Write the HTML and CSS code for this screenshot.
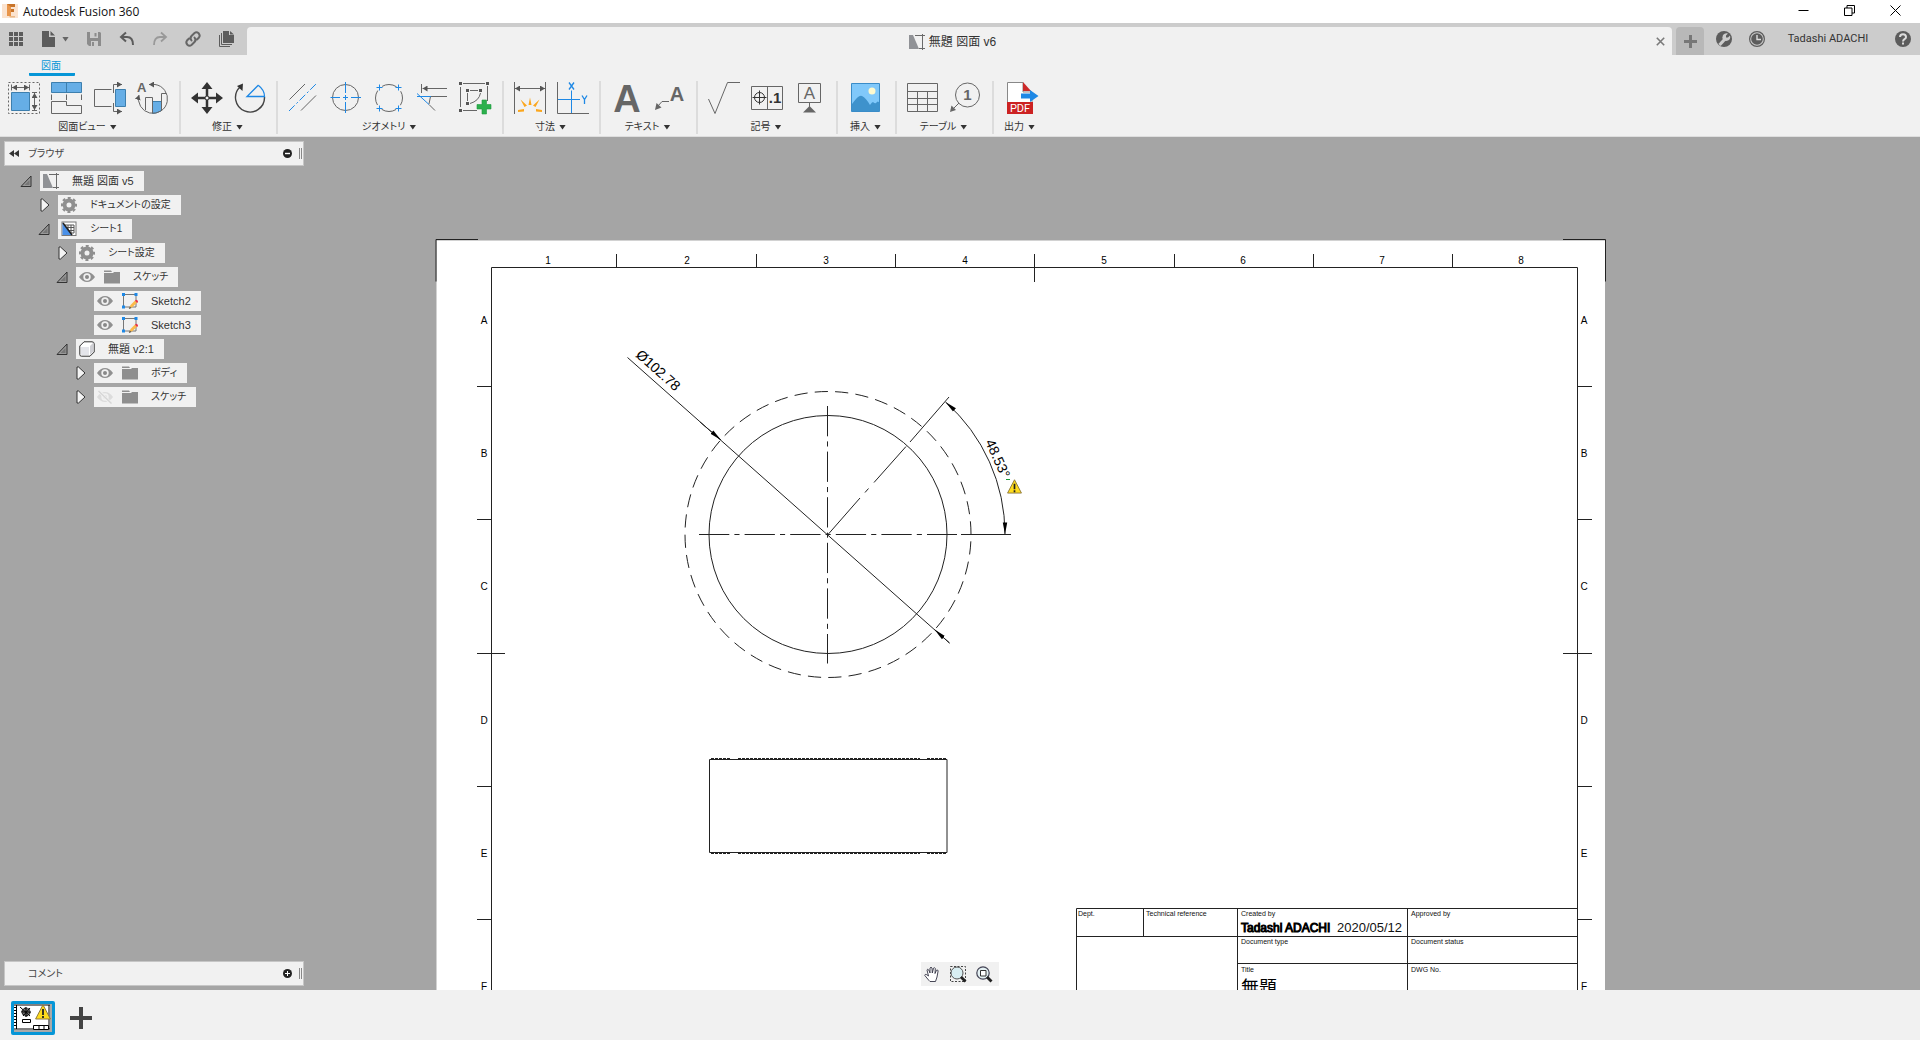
FILE: index.html
```html
<!DOCTYPE html>
<html lang="ja">
<head>
<meta charset="utf-8">
<title>Autodesk Fusion 360</title>
<meta name="viewport" content="width=device-width, initial-scale=1">
<link rel="stylesheet" href="styles.css">
</head>
<body>
<svg class="defs" aria-hidden="true">
  <defs>
    <symbol id="i-drawing" viewBox="0 0 16 16">
      <path d="M0 1h4l6 14H0z" fill="#909296"/>
      <path d="M6 1.500h10M13.500 0v16M10 14.500h6" fill="none" stroke="#6a6a6a"/>
    </symbol>
    <symbol id="i-gear" viewBox="0 0 16 16">
      <circle cx="8" cy="8" r="4.500" fill="none" stroke="#8f8f8f" stroke-width="4"/>
      <circle cx="8" cy="8" r="7" fill="none" stroke="#8f8f8f" stroke-width="2.400" stroke-dasharray="2.900 2.598" stroke-dashoffset="1.450"/>
    </symbol>
    <symbol id="i-sheet" viewBox="0 0 16 16">
      <rect x="1" y="1" width="14" height="13.500" fill="#fff" stroke="#777"/>
      <path d="M4 4h9v8H4zM7 4v8M10 4v8M4 6.500h9M4 9.500h9" fill="none" stroke="#555"/>
      <path d="M1.500 2L11 14H1.500z" fill="#4a90e8"/>
      <path d="M2 2l9 12" stroke="#222" stroke-width="1.500"/>
    </symbol>
    <symbol id="i-eye" viewBox="0 0 16 16">
      <path d="M0 8Q3.500 3 8 3t8 5q-3.500 5-8 5T0 8z" fill="#909090"/>
      <circle cx="8" cy="8" r="3.700" fill="#f1f1f1"/>
      <circle cx="8" cy="8" r="2" fill="#888"/>
    </symbol>
    <symbol id="i-eye-off" viewBox="0 0 16 16">
      <path d="M0 8Q3.500 3 8 3t8 5q-3.500 5-8 5T0 8z" fill="#dcdcdc"/>
      <circle cx="8" cy="8" r="3.700" fill="#f1f1f1"/>
      <circle cx="8" cy="8" r="2" fill="#dcdcdc"/>
      <path d="M2 2l12 12.500" stroke="#f1f1f1" stroke-width="3"/>
      <path d="M1.500 2l13 12.500" stroke="#d6d6d6" stroke-width="1.400"/>
    </symbol>
    <symbol id="i-folder" viewBox="0 0 16 16">
      <path d="M0 1.500h7l1 1.500H0zM0 4h9l1-1h6v11.500H0z" fill="#8f8f8f"/>
    </symbol>
    <symbol id="i-sketch" viewBox="0 0 16 16">
      <path d="M1.500 1.500h12.500v12.500h-12.500z" fill="none" stroke="#777"/>
      <path d="M0 0h3v3H0zM12.500 0h3v3h-3zM0 12.500h3v3H0z" fill="#1e88e5"/>
      <path d="M7 16l1.500-4 4.500-4.500 2.200 2-4.700 4.500z" fill="#fbb94a"/>
      <path d="M13 7.800l1-1q2.200.2 2 2.200l-.9.900z" fill="#e8304a"/>
      <path d="M6.800 16l1-2.500 1.700 1.500z" fill="#555"/>
    </symbol>
    <symbol id="i-cube" viewBox="0 0 16 16">
      <path d="M.8 5L5 .8h8Q15.200.8 15.200 3v8L11 15.200H2.500Q.8 15.200.8 13.500z" fill="#fff" stroke="#333"/>
      <path d="M2 6h8v8H3Q2 14 2 13z" fill="#e4e5ea"/>
      <path d="M11 5l3.500-3.500v9L11 14z" fill="#cfcfd4"/>
    </symbol>
    <symbol id="i-open" viewBox="0 0 12 12">
      <path d="M11 1v10.500H1z" fill="#999" stroke="#333"/>
      <path d="M9.500 5v5h-5z" fill="#777"/>
    </symbol>
    <symbol id="i-closed" viewBox="0 0 12 14">
      <path d="M2 1h1.500l6.500 6-6.500 6H2z" fill="#f4f4f4" stroke="#333"/>
    </symbol>
    <symbol id="i-warning" viewBox="0 0 16 16">
      <path d="M8 .8L15.400 15H.6z" fill="#ffdc1c" stroke="#8f7a3c" stroke-linejoin="round"/>
      <path d="M8 5v6M8 12v2" stroke="#222" stroke-width="1.800"/>
    </symbol>
    <marker id="tip" viewBox="0 0 12 6" refX="12" refY="3" markerWidth="12" markerHeight="6" markerUnits="userSpaceOnUse" orient="auto-start-reverse">
      <path d="M0 .8L12 3 0 5.200z"/>
    </marker>
    <marker id="tip-s" viewBox="0 0 5 6" refX="5" refY="3" markerWidth="5" markerHeight="6" markerUnits="userSpaceOnUse" orient="auto-start-reverse">
      <path d="M0 0L5 3 0 6z" fill="#555"/>
    </marker>
  </defs>
</svg>

<header class="titlebar">
  <svg class="logo" viewBox="0 0 16 16" aria-hidden="true">
    <path d="M0 1h16v14H0z" fill="#fbe3cf"/>
    <path d="M5 1h8v3H9v2h3v3H9v4H5z" fill="#c8742a"/>
    <path d="M5 1l4 3v9H5z" fill="#e8954a"/>
    <path d="M7 13h6v1.500H8z" fill="#e9b98a"/>
  </svg>
  <h1 class="app-name">Autodesk Fusion 360</h1>
  <div class="window-buttons">
    <button type="button" aria-label="最小化"><svg viewBox="0 0 11 11"><path d="M.5 5.500h10"/></svg></button>
    <button type="button" aria-label="元に戻す"><svg viewBox="0 0 11 11"><path d="M.5 3h7.500v7.500H.5zM3 3V.5h7.500V8H8"/></svg></button>
    <button type="button" aria-label="閉じる"><svg viewBox="0 0 11 11"><path d="M.5.5l10 10M10.500.5l-10 10"/></svg></button>
  </div>
</header>

<div class="appbar">
  <div class="quick">
    <button type="button" aria-label="データパネル"><svg class="i16" viewBox="0 0 16 16"><path fill="#5c5c5c" d="M1 1h4v4H1zM6 1h4v4H6zM11 1h4v4h-4zM1 6h4v4H1zM6 6h4v4H6zM11 6h4v4h-4zM1 11h4v4H1zM6 11h4v4H6zM11 11h4v4h-4z"/></svg></button>
    <button type="button" class="with-caret" aria-label="ファイル"><svg class="i16" viewBox="0 0 16 16"><path fill="#5c5c5c" d="M1 0h7v6h6v10H1zM9.500 0L14 4.500H9.500z"/></svg><span class="caret caret-soft"></span></button>
    <button type="button" aria-label="保存"><svg class="i16" viewBox="0 0 16 16"><path fill="#8c8c8c" fill-rule="evenodd" d="M1 1h13l1 1v13H3l-2-2zM4 1v6h8V1zM8.500 2h2v3.500h-2zM5 10v5h7v-5zM6 11h2v4H6z"/></svg></button>
    <button type="button" aria-label="元に戻す"><svg class="i16" viewBox="0 0 16 16"><path fill="none" stroke="#5c5c5c" stroke-width="2" d="M7 1.500L2 6l5 4.500M2 6h6q6 0 6 8"/></svg></button>
    <button type="button" aria-label="やり直し"><svg class="i16" viewBox="0 0 16 16"><path fill="none" stroke="#999" stroke-width="1.800" d="M9 1.500L14 6l-5 4.500M14 6H8Q2 6 2 14"/></svg></button>
    <button type="button" aria-label="リンク"><svg class="i16" viewBox="0 0 16 16"><path fill="none" stroke="#666" stroke-width="2" stroke-linecap="round" d="M6.500 9.500Q4.500 7 6.500 5L9.500 2Q11.500.5 13.700 2.300 15.500 4.500 14 6.500l-2 2M9.500 6.500q2 2.500 0 4.500l-3 3Q4.500 15.500 2.300 13.700.5 11.500 2 9.500l2-2"/></svg></button>
    <button type="button" aria-label="コピー"><svg class="i16" viewBox="0 0 16 16"><path fill="#5c5c5c" d="M5 0h6v4h5v8H5zM12 0l4 3.500h-4z"/><path fill="none" stroke="#5c5c5c" d="M3.500 2v11.500H14M1.500 4v11.500H12"/></svg></button>
  </div>
  <div class="doc-tab">
    <div class="doc-title"><svg class="i16"><use href="#i-drawing"/></svg><span>無題 図面 v6</span></div>
    <button type="button" aria-label="タブを閉じる"><svg class="i-close" viewBox="0 0 9 9"><path d="M.8.8l7.400 7.400M8.200.8L.8 8.200" fill="none" stroke="#7a7a7a" stroke-width="1.600"/></svg></button>
  </div>
  <button type="button" class="new-tab" aria-label="新しいタブ"><svg class="i-plus" viewBox="0 0 13 13"><path d="M6.500 0v13M0 6.500h13" stroke="#777" stroke-width="3"/></svg></button>
  <div class="account">
    <button type="button" aria-label="ジョブの状態"><svg class="i16" viewBox="0 0 16 16"><circle cx="8" cy="8" r="8" fill="#5c5c5c"/><path d="M3.500 14L9 8" stroke="#ccc" stroke-width="3.200"/><path d="M12 2.500L10 4.500v2h2l2-2q1 3.500-2 5-2.500 1-4.500-.5Q5.500 6.500 7 4q2-2.500 5-1.500z" fill="#ccc"/></svg></button>
    <button type="button" aria-label="履歴"><svg class="i16" viewBox="0 0 16 16"><circle cx="8" cy="8" r="7.400" fill="none" stroke="#5c5c5c" stroke-width="1.200"/><circle cx="8" cy="8" r="5.800" fill="#5c5c5c"/><path d="M8 4v4.500h4" fill="none" stroke="#ddd" stroke-width="1.400"/></svg></button>
    <button type="button" class="user">Tadashi ADACHI</button>
    <button type="button" aria-label="ヘルプ"><svg class="i16" viewBox="0 0 16 16"><circle cx="8" cy="8" r="8" fill="#5c5c5c"/><path d="M5 6Q5 3.200 8 3.200T11 6q0 1.300-1.500 2.200T8 10.500" fill="none" stroke="#ddd" stroke-width="2"/><path d="M7 11.500h2v2H7z" fill="#ddd"/></svg></button>
  </div>
</div>

<nav class="ribbon" aria-label="ツールバー">
  <div class="ribbon-tabs"><button type="button" class="ribbon-tab">図面</button></div>
  <div class="groups">
    <section class="group">
      <div class="tools">
        <button type="button" aria-label="ベースビュー"><svg class="i32" viewBox="0 0 32 32"><path class="ln" stroke-dasharray="2 2" d="M.5.500h31v31H.5z"/><path class="bl" d="M3.500 10.500h18v18h-18z"/><path class="ln" d="M3.500 2.500v6M21.500 2.500v6M24 10.500h5M24 28.500h5"/><path class="ln" marker-start="url(#tip-s)" marker-end="url(#tip-s)" d="M4 5.500h17"/><path class="ln" marker-start="url(#tip-s)" marker-end="url(#tip-s)" d="M26.500 11v17"/></svg></button>
        <button type="button" aria-label="投影ビュー"><svg class="i32" viewBox="0 0 32 32"><path class="bl" d="M.5.500h30v10H.5zM15.500.500v10"/><path class="ln" d="M.5 12.500v5.500M15.500 12.500v5.500M30.500 12.500v5.500M.5 19.500h15v4h15v8H.5z"/></svg></button>
        <button type="button" aria-label="断面図"><svg class="i32" viewBox="0 0 32 32"><path class="bl" d="M21.500 7.500h10v17h-10z"/><path class="ln" d="M17.500 7.500H.5v17h17"/><path class="ln" marker-end="url(#tip-s)" d="M19.500 11V2.500H28"/><path class="ln" marker-end="url(#tip-s)" d="M19.500 21v8.500H28"/></svg></button>
        <button type="button" aria-label="詳細図"><svg class="i32" viewBox="0 0 32 32"><text x="0" y="10" class="glyph g13">A</text><path class="bl" d="M15.500 19.500h9v9l-4 2-5 1z"/><path class="ln" d="M8.500 28V15.500h7V31M24.500 28V11.500h5"/><path class="ln" marker-start="url(#tip-s)" marker-end="url(#tip-s)" d="M12 2.500h6A14.500 14.500 0 1 1 2 13"/></svg></button>
      </div>
      <button type="button" class="group-label">図面ビュー<span class="caret"></span></button>
    </section>
    <section class="group">
      <div class="tools">
        <button type="button" aria-label="移動"><svg class="i32" viewBox="0 0 32 32"><path d="M16 4v24M4 16h24" stroke="#333" stroke-width="2.500"/><path d="M16 0l5.500 7h-11zM16 32l-5.500-7h11zM0 16l7-5.500v11zM32 16l-7 5.500v-11z" fill="#333"/><circle cx="16" cy="16" r="2" fill="#f1f1f1" stroke="#333"/></svg></button>
        <button type="button" aria-label="回転"><svg class="i32" viewBox="0 0 32 32"><path d="M6 5A14.500 14.500 0 1 0 30.500 15" fill="none" stroke="#444" stroke-width="1.400"/><path d="M9 1.500L3 4l5.500 5z" fill="#333"/><path d="M24.500 3.500Q30.500 8 30.500 14.500H13L24.500 3" fill="none" stroke="#1e88e5" stroke-width="1.300"/></svg></button>
      </div>
      <button type="button" class="group-label">修正<span class="caret"></span></button>
    </section>
    <section class="group">
      <div class="tools">
        <button type="button" aria-label="中心線"><svg class="i32" viewBox="0 0 32 32"><path class="ln" d="M1.500 17.500L17 2M13 28.500l15-15"/><path class="lb" stroke-dasharray="8 2.500 2 2.500" d="M1 29L28 2"/></svg></button>
        <button type="button" aria-label="中心マーク"><svg class="i32" viewBox="0 0 32 32"><circle class="ln" cx="14.500" cy="15.500" r="13"/><path class="lb" d="M14.500 0v11M14.500 20v11M-.5 15.500H9M20 15.500h10M12 15.500h5M14.500 13v5"/></svg></button>
        <button type="button" aria-label="中心マークパターン"><svg class="i32" viewBox="0 0 32 32"><circle class="ln" cx="15" cy="16" r="13.500" stroke-dasharray="15.200 6" stroke-dashoffset="7.600"/><path class="lb" d="M2.500 5.500h6M5.500 2.500v6M21.500 5.500h6M24.500 2.500v6M2.500 26.500h6M5.500 23.500v6M21.500 26.500h6M24.500 23.500v6"/></svg></button>
        <button type="button" aria-label="エッジ延長"><svg class="i32" viewBox="0 0 32 32"><path class="ln" d="M4.500 2v9M14 14.500h16M12 22.500l6 6M13.500 14.500L12 22"/><path class="ln" marker-start="url(#tip-s)" d="M5.500 6.500H30"/><path class="lb" d="M0 14.500h14M0 11.500l12 11"/></svg></button>
        <button type="button" aria-label="スケッチを作成"><svg class="i32" viewBox="0 0 32 32"><path class="ln" d="M.5 5v20M3 1.500h22M27.500 4v15M3 28.500h14M7.500 11v8M10 8.500h8M20.500 11Q19 19 10 21.500"/><path d="M-1 0h3v3h-3zM26 0h3v3h-3zM-1 27h3v3h-3zM6 7h3v3H6zM19 7h3v3h-3zM6 20h3v3H6z" fill="#555"/><path d="M22 18h4.500v4.500H31V27h-4.500v5H22v-5h-5v-4.500h5z" fill="#2bb04c" stroke="#1d9a3e" stroke-width=".6"/></svg></button>
      </div>
      <button type="button" class="group-label">ジオメトリ<span class="caret"></span></button>
    </section>
    <section class="group">
      <div class="tools">
        <button type="button" aria-label="寸法"><svg class="i32" viewBox="0 0 32 32"><path class="ln" d="M.5 0v32M31.500 0v32"/><path class="ln" marker-start="url(#tip-s)" marker-end="url(#tip-s)" d="M1 6.500h30"/><path fill="#fba61c" d="M14.500 23L16 15.500 17.500 23zM19 23.500l6.500-6-4 7.500zM13 23.500l-6.500-6 4 7.500zM22 27l6 1v2l-6-.5zM10 27l-6 1v2l6-.5z"/></svg></button>
        <button type="button" aria-label="座標寸法"><svg class="i32" viewBox="0 0 32 32"><path class="ln" d="M.5 0v31.500H32"/><path class="lb" d="M14.500 8.500v22.500M1 17.500h22"/><path class="lb axis" d="M12 .500l5 7M17 .500l-5 7M25 13.500l2.500 4 2.500-4M27.500 17.500V22"/></svg></button>
      </div>
      <button type="button" class="group-label">寸法<span class="caret"></span></button>
    </section>
    <section class="group">
      <div class="tools">
        <button type="button" aria-label="テキスト"><svg class="i32" viewBox="0 0 32 32"><text x="16" y="30" text-anchor="middle" class="glyph g38">A</text></svg></button>
        <button type="button" aria-label="引出線"><svg class="i32" viewBox="0 0 32 32"><text x="23" y="19" text-anchor="middle" class="glyph g20">A</text><path class="ln" d="M4 24l4-4.500h7"/><path d="M1 28l1.500-7 5 4.500z" fill="#666"/></svg></button>
      </div>
      <button type="button" class="group-label">テキスト<span class="caret"></span></button>
    </section>
    <section class="group">
      <div class="tools">
        <button type="button" aria-label="表面性状"><svg class="i32" viewBox="0 0 32 32"><path class="ln" d="M.5 17L7 31.500 19.500.500H32"/></svg></button>
        <button type="button" aria-label="幾何公差"><svg class="i32" viewBox="0 0 32 32"><path class="ln" d="M.5 4.500h31v23H.5zM16.500 4.500v23"/><path d="M8.500 8.500v14M1.500 15.500h14" stroke="#333"/><circle cx="8.500" cy="15.500" r="5" fill="none" stroke="#333"/><text x="24" y="21" text-anchor="middle" class="glyph dark g15">.1</text></svg></button>
        <button type="button" aria-label="データム"><svg class="i32" viewBox="0 0 32 32"><path class="ln" d="M4.500 1.500h22v19h-22zM15.500 20.500V26"/><text x="15.500" y="17" text-anchor="middle" class="glyph thin g17">A</text><path d="M15.500 24l6.500 6.500H9z" fill="#666"/></svg></button>
      </div>
      <button type="button" class="group-label">記号<span class="caret"></span></button>
    </section>
    <section class="group">
      <div class="tools">
        <button type="button" aria-label="イメージを挿入"><svg class="i32" viewBox="0 0 32 32"><path fill="#80c8fa" stroke="#3a8cc8" d="M.5 1.500h28v28H.5z"/><circle cx="21" cy="9" r="3.500" fill="#fdf9cf"/><path d="M1 22q7-10 10-8 4 2 8 9 2-3 3-3 2 2 3 1 2-3 3.500 0v8H1z" fill="#3e92cc"/></svg></button>
      </div>
      <button type="button" class="group-label">挿入<span class="caret"></span></button>
    </section>
    <section class="group">
      <div class="tools">
        <button type="button" aria-label="テーブル"><svg class="i32" viewBox="0 0 32 32"><path class="ln" d="M.5 1.500h30v28H.5zM.5 9.500h30M.5 16.500h30M.5 22.500h30M10.500 9.500v20M20.500 9.500v20"/></svg></button>
        <button type="button" aria-label="バルーン"><svg class="i32" viewBox="0 0 32 32"><circle class="ln" cx="17.500" cy="13" r="12"/><text x="17.500" y="18" text-anchor="middle" class="glyph g15">1</text><path class="ln" d="M4 26l5-5"/><path d="M0 30l1.500-6.500L6 28z" fill="#666"/></svg></button>
      </div>
      <button type="button" class="group-label">テーブル<span class="caret"></span></button>
    </section>
    <section class="group">
      <div class="tools">
        <button type="button" aria-label="PDF を書き出し"><svg class="i32" viewBox="0 0 32 32"><path d="M2.500 20V.500H18V10h9v10" fill="#fff" stroke="#888"/><path d="M18 0l8 9h-8z" fill="#cc2a2a"/><path d="M2 20h26v12H2z" fill="#cc2222"/><text x="15" y="30" text-anchor="middle" class="pdf">PDF</text><path d="M16 11.500h9V8l8.500 6-8.500 6v-3.500h-9z" fill="#1e88e5"/></svg></button>
      </div>
      <button type="button" class="group-label">出力<span class="caret"></span></button>
    </section>
  </div>
</nav>

<main class="workspace">
  <svg class="canvas" viewBox="0 137 1920 853" preserveAspectRatio="xMidYMin slice" role="img" aria-label="図面シート">
    <path d="M436.500 240.500h1168.500v761H436.500z" fill="#fff"/>
    <g class="frame">
      <path d="M478 239.500h-42v42M1563 239.500h42.500v42"/>
      <path d="M491.500 1000V267.500h1086V1000"/>
      <path d="M616.500 254v13M756.500 254v13M895.500 254v13M1034.500 254v28M1174.500 254v13M1313.500 254v13M1452.500 254v13"/>
      <path d="M477 386.500h14M477 519.500h14M477 653.500h28M477 786.500h14M477 919.500h14M1578 386.500h14M1578 519.500h14M1563 653.500h29M1578 786.500h14M1578 919.500h14"/>
    </g>
    <g class="zone">
      <text x="548" y="264">1</text><text x="687" y="264">2</text><text x="826" y="264">3</text><text x="965" y="264">4</text>
      <text x="1104" y="264">5</text><text x="1243" y="264">6</text><text x="1382" y="264">7</text><text x="1521" y="264">8</text>
      <text x="484" y="324">A</text><text x="484" y="457">B</text><text x="484" y="590">C</text><text x="484" y="724">D</text><text x="484" y="857">E</text><text x="484" y="990">F</text>
      <text x="1584" y="324">A</text><text x="1584" y="457">B</text><text x="1584" y="590">C</text><text x="1584" y="724">D</text><text x="1584" y="857">E</text><text x="1584" y="990">F</text>
    </g>
    <g class="geometry">
      <circle cx="828" cy="534.500" r="119"/>
      <path d="M971 534.500A143 143 0 0 0 685 534.500A143 143 0 0 0 971 534.500" stroke-dasharray="13.200 7.220"/>
      <path d="M827.500 406v257.500" stroke-dasharray="30.300 5.100 5.100 5.100"/>
      <path d="M699 534.500h258" stroke-dasharray="30.300 5.100 5.100 5.100"/>
      <path d="M961 534.500h50"/>
      <path d="M828 534.500L860 498M865 492.500l3.500-4M874 482.500L906 446.500M910 442L949 397"/>
      <path d="M627.500 357.500L949.500 643"/>
      <path marker-end="url(#tip)" d="M700 422L721 440"/>
      <path marker-end="url(#tip)" d="M949.500 643L934.500 629.500"/>
      <path marker-start="url(#tip)" marker-end="url(#tip)" d="M945.500 402A177 177 0 0 1 1005 534.500"/>
    </g>
    <g class="frame">
      <path d="M709.500 759.500h237.500v93h-237.500z"/>
      <path d="M711 758.500h20M738 758.500h182M927 758.500h20M711 853.500h20M738 853.500h182M927 853.500h20" stroke-dasharray="3 1"/>
    </g>
    <g class="dimension">
      <text transform="translate(635 356) rotate(41.600)">Ø102.78</text>
      <text transform="translate(985 442) rotate(65.700)">48.53°</text>
    </g>
    <path d="M1006 479.500h4" stroke="#1a9a3a"/>
    <use href="#i-warning" x="1007" y="479" width="15" height="15"/>
    <g class="frame">
      <path d="M1577 908.500h-500.500V1000M1076 936.500h501M1238 963.500h339M1143.500 908v28M1237.500 908v92M1407.500 908v92"/>
    </g>
    <g class="caption">
      <text x="1078" y="916">Dept.</text><text x="1146" y="916">Technical reference</text><text x="1241" y="916">Created by</text><text x="1411" y="916">Approved by</text>
      <text x="1241" y="944">Document type</text><text x="1411" y="944">Document status</text>
      <text x="1241" y="972">Title</text><text x="1411" y="972">DWG No.</text>
    </g>
    <text class="author" x="1241" y="932">Tadashi ADACHI</text>
    <text class="date" x="1337" y="932">2020/05/12</text>
    <text class="sheet-title" x="1241" y="994">無題</text>
  </svg>

  <aside class="side">
    <div>
      <div class="panel-head">
        <button type="button" aria-label="折りたたむ" class="collapse"><svg class="i-back" viewBox="0 0 10 7"><path d="M5 0v7L0 3.500zM10 0v7L5 3.500z" fill="#333"/></svg></button>
        <h2>ブラウザ</h2>
        <button type="button" aria-label="最小化"><svg class="i-dot" viewBox="0 0 9 9"><circle cx="4.500" cy="4.500" r="4.500" fill="#222"/><path d="M2 4.500h5" stroke="#fff" stroke-width="1.400"/></svg></button>
        <span class="grip"></span>
      </div>
      <ul class="tree">
        <li><div class="row"><button type="button" class="toggle" aria-label="閉じる"><svg class="i12"><use href="#i-open"/></svg></button><span class="chip"><svg class="i16"><use href="#i-drawing"/></svg><span class="name">無題 図面 v5</span></span></div>
          <ul>
            <li><div class="row"><button type="button" class="toggle shut" aria-label="開く"><svg class="i14"><use href="#i-closed"/></svg></button><span class="chip"><svg class="i16"><use href="#i-gear"/></svg><span class="name kana">ドキュメントの設定</span></span></div></li>
            <li><div class="row"><button type="button" class="toggle" aria-label="閉じる"><svg class="i12"><use href="#i-open"/></svg></button><span class="chip"><svg class="i16"><use href="#i-sheet"/></svg><span class="name kana">シート1</span></span></div>
              <ul>
                <li><div class="row"><button type="button" class="toggle shut" aria-label="開く"><svg class="i14"><use href="#i-closed"/></svg></button><span class="chip"><svg class="i16"><use href="#i-gear"/></svg><span class="name kana">シート設定</span></span></div></li>
                <li><div class="row"><button type="button" class="toggle" aria-label="閉じる"><svg class="i12"><use href="#i-open"/></svg></button><span class="chip"><svg class="i16 eye"><use href="#i-eye"/></svg><svg class="i16"><use href="#i-folder"/></svg><span class="name kana">スケッチ</span></span></div>
                  <ul>
                    <li><div class="row leaf"><span class="chip"><svg class="i16 eye"><use href="#i-eye"/></svg><svg class="i16"><use href="#i-sketch"/></svg><span class="name">Sketch2</span></span></div></li>
                    <li><div class="row leaf"><span class="chip"><svg class="i16 eye"><use href="#i-eye"/></svg><svg class="i16"><use href="#i-sketch"/></svg><span class="name">Sketch3</span></span></div></li>
                  </ul>
                </li>
                <li><div class="row"><button type="button" class="toggle" aria-label="閉じる"><svg class="i12"><use href="#i-open"/></svg></button><span class="chip"><svg class="i16"><use href="#i-cube"/></svg><span class="name">無題 v2:1</span></span></div>
                  <ul>
                    <li><div class="row"><button type="button" class="toggle shut" aria-label="開く"><svg class="i14"><use href="#i-closed"/></svg></button><span class="chip"><svg class="i16 eye"><use href="#i-eye"/></svg><svg class="i16"><use href="#i-folder"/></svg><span class="name kana">ボディ</span></span></div></li>
                    <li><div class="row"><button type="button" class="toggle shut" aria-label="開く"><svg class="i14"><use href="#i-closed"/></svg></button><span class="chip"><svg class="i16 eye"><use href="#i-eye-off"/></svg><svg class="i16"><use href="#i-folder"/></svg><span class="name kana">スケッチ</span></span></div></li>
                  </ul>
                </li>
              </ul>
            </li>
          </ul>
        </li>
      </ul>
    </div>
    <div class="panel-head">
      <span class="collapse"></span>
      <h2>コメント</h2>
      <button type="button" aria-label="展開"><svg class="i-dot" viewBox="0 0 9 9"><circle cx="4.500" cy="4.500" r="4.500" fill="#222"/><path d="M2 4.500h5M4.500 2v5" stroke="#fff"/></svg></button>
      <span class="grip"></span>
    </div>
  </aside>

  <div class="navbar">
    <button type="button" aria-label="画面移動"><svg class="i16" viewBox="0 0 16 16"><path d="M5 14.500L.8 9.500q0-1.800 2-.8L4.500 10 3 4q.5-1.600 1.800 0L6 7V2q1-1.600 2 0l.3 5L9.500 2.200q1.200-1.200 1.800.3L11 7.500l1.500-3.300q1.500-.8 1.600.8L13 11l-1.500 4.500H6z" fill="#fff" stroke="#334" stroke-width=".9"/></svg></button>
    <button type="button" aria-label="窓ズーム"><svg class="i16" viewBox="0 0 16 16"><path d="M.5.500h15v15H.5z" fill="none" stroke="#444" stroke-dasharray="2 1.500"/><circle cx="7" cy="7" r="6" fill="#d8eef2" stroke="#555"/><path d="M11 11l4.500 4.500" stroke="#222" stroke-width="2.800"/></svg></button>
    <button type="button" aria-label="フィット"><svg class="i16" viewBox="0 0 16 16"><circle cx="7" cy="7" r="6.200" fill="#e4f0f3" stroke="#445" stroke-width="1.200"/><path d="M4.500 4.500h5.500V10H4.500z" fill="#fff" stroke="#333"/><path d="M11 11l4.500 4.500" stroke="#222" stroke-width="2.800"/></svg></button>
  </div>
</main>

<footer class="sheets">
  <button type="button" class="thumb" aria-label="シート1">
    <svg viewBox="0 0 38 28">
      <path d="M0 0h38v28H0z" fill="#fff"/>
      <path d="M36 0h2v28h-2zM0 26h38v2H0z" fill="#aaa"/>
      <path d="M0 1h36M0 25h36M2.500 1v24M35 1v24" stroke="#000" fill="none"/>
      <path d="M1 3v21" stroke="#000" stroke-width="2" stroke-dasharray="1 2"/>
      <circle cx="12" cy="8" r="4" fill="#777" stroke="#000" stroke-dasharray="3 1"/>
      <path d="M6 3l10 9M12 3v10M7 8h10M16 4l-7 8" stroke="#000"/>
      <path d="M8.500 15.500h8v3h-8zM19.500 21.500h15v4h-15zM25 21v4M30 21v4" fill="#fff" stroke="#000"/>
      <use href="#i-warning" x="21" y="0" width="16" height="16"/>
    </svg>
  </button>
  <button type="button" class="add-sheet" aria-label="シートを追加"><svg viewBox="0 0 22 22"><path d="M11 0v22M0 11h22" stroke="#444" stroke-width="4"/></svg></button>
</footer>
</body>
</html>
```
FILE: styles.css
```css
* { box-sizing: border-box; }

body {
  margin: 0;
  min-height: 100vh;
  display: flex;
  flex-direction: column;
  overflow: hidden;
  background: #f1f1f1;
  color: #333;
  font-family: "Liberation Sans", "Noto Sans CJK JP", sans-serif;
  font-size: 11px;
  line-height: 16px;
  font-feature-settings: "palt";
}

button {
  display: flex;
  align-items: center;
  justify-content: center;
  margin: 0;
  padding: 0;
  border: 0;
  background: none;
  color: inherit;
  font: inherit;
  font-feature-settings: inherit;
}

h1, h2 { margin: 0; font-size: 11px; font-weight: 400; }
ul { margin: 0; padding: 0; list-style: none; }
svg { display: block; flex: none; overflow: visible; }

.defs { position: absolute; width: 0; height: 0; }
.i12 { width: 12px; height: 12px; }
.i14 { width: 12px; height: 14px; }
.i16 { width: 16px; height: 16px; }
.i32 { width: 32px; height: 32px; }

/* Window title bar */
.titlebar {
  display: flex;
  align-items: flex-start;
  height: 23px;
  padding-left: 2px;
  gap: 5px;
  background: #fff;
}
.logo { width: 16px; height: 16px; margin-top: 3px; }
.app-name {
  flex: 1;
  color: #111;
  font-family: "Open Sans", sans-serif;
  font-size: 12px;
  line-height: 23px;
}
.window-buttons { display: flex; padding-right: 2px; }
.window-buttons button { width: 46px; height: 20px; }
.window-buttons svg { width: 11px; height: 11px; fill: none; stroke: #000; }

/* Quick access, document tab, account */
.appbar {
  display: flex;
  align-items: stretch;
  height: 32px;
  background: #ccc;
}
.quick {
  display: flex;
  align-items: center;
  gap: 17px;
  padding: 0 13px 0 8px;
}
.with-caret { width: 28px; justify-content: space-between; }
.caret {
  width: 7px;
  height: 5px;
  background: #333;
  clip-path: polygon(0 0, 100% 0, 50% 100%);
}
.caret-soft { background: #666; }
.doc-tab {
  flex: 1;
  display: flex;
  align-items: center;
  margin-top: 4px;
  padding-right: 7px;
  border-radius: 4px 4px 0 0;
  background: #f1f1f1;
}
.doc-title {
  flex: 1;
  display: flex;
  align-items: center;
  justify-content: center;
  gap: 4px;
  padding: 2px 0 0 2px;
  font-size: 12px;
}
.i-close { width: 9px; height: 9px; }
.i-plus { width: 13px; height: 13px; }
.new-tab {
  width: 28px;
  margin: 4px 0 0 4px;
  border-radius: 4px 4px 0 0;
  background: #b8b8b8;
}
.account {
  display: flex;
  align-items: center;
  gap: 17px;
  padding: 0 9px 0 12px;
}
.user {
  width: 96px;
  padding-right: 4px;
  color: #333;
  font-family: Roboto, sans-serif;
}

/* Ribbon */
.ribbon { border-bottom: 1px solid #dedede; background: #f1f1f1; }
.ribbon-tabs { display: flex; height: 26px; padding-left: 29px; }
.ribbon-tab {
  width: 46px;
  height: 21px;
  padding: 4px 2px 0 0;
  border-bottom: 3px solid #0696d7;
  border-radius: 1px;
  color: #0696d7;
  font-size: 10px;
  line-height: 14px;
}
.groups { display: flex; padding-bottom: 2px; }
.group {
  min-width: 59px;
  padding: 1px 10px 0;
  border-right: 2px solid #dcdcdc;
}
.group:first-child { padding-left: 8px; }
.group:last-child { min-width: 0; border-right: 0; }
.tools { display: flex; justify-content: center; gap: 11px; }
.group-label {
  width: 100%;
  height: 14px;
  margin-top: 6px;
  padding-right: 2px;
  gap: 4px;
  font-size: 10px;
  line-height: 14px;
  white-space: nowrap;
}
.ln { fill: none; stroke: #666; }
.lb { fill: none; stroke: #1e88e5; }
.axis { stroke-width: 1.3px; }
.bl { fill: #66aee6; stroke: #3d7fae; }
.glyph { fill: #666; font-family: "Liberation Sans", sans-serif; font-weight: 700; }
.thin { font-weight: 400; }
.dark { fill: #333; }
.g13 { font-size: 13px; }
.g15 { font-size: 15px; }
.g17 { font-size: 17px; }
.g20 { font-size: 20px; }
.g38 { font-size: 38px; }
.pdf { fill: #fff; font-family: Roboto, sans-serif; font-size: 11px; }

/* Workspace */
.workspace {
  position: relative;
  flex: 1;
  display: flex;
  min-height: 500px;
  overflow: hidden;
  background: #a5a5a5;
}
.canvas { position: absolute; inset: 0; width: 100%; height: 100%; }
.frame, .geometry { fill: none; stroke: #222; }
.zone { fill: #000; font-size: 10px; text-anchor: middle; }
.dimension { fill: #000; font-size: 14px; }
.caption { fill: #111; font-size: 7px; }
.author { fill: #000; stroke: #000; stroke-width: 1px; font-size: 12px; }
.date { fill: #111; font-size: 13px; }
.sheet-title { fill: #000; font-size: 18px; }

.side {
  position: relative;
  display: flex;
  flex-direction: column;
  justify-content: space-between;
  width: 304px;
  padding: 4px 0 4px 4px;
}
.panel-head {
  display: flex;
  align-items: center;
  height: 25px;
  padding: 0 1px 0 4px;
  border: 1px solid #c6c6c6;
  background: #f1f1f1;
}
.panel-head h2 { flex: 1; font-size: 10px; color: #444; }
.collapse { width: 19px; justify-content: flex-start; }
.i-back { width: 10px; height: 7px; }
.i-dot { width: 9px; height: 9px; }
.grip {
  width: 3px;
  height: 11px;
  margin-left: 7px;
  border: solid #888;
  border-width: 0 1px;
}

.tree { padding: 5px 0 0 16px; }
.tree ul { padding-left: 18px; }
.row { display: flex; align-items: center; height: 20px; margin-bottom: 4px; }
.leaf { padding-left: 20px; }
.toggle { width: 20px; height: 20px; justify-content: flex-start; }
.shut { padding-left: 1px; }
.chip {
  display: flex;
  align-items: center;
  height: 20px;
  padding: 0 10px 0 3px;
  background: #f1f1f1;
}
.eye { margin-right: 9px; }
.name { margin-left: 13px; white-space: nowrap; }
.kana { font-size: 10px; }

.navbar {
  position: absolute;
  left: 50%;
  bottom: 4px;
  display: flex;
  width: 78px;
  height: 24px;
  margin-left: -39px;
  background: #f1f1f1;
}
.navbar button { width: 26px; padding-right: 4px; }

/* Sheet strip */
.sheets {
  display: flex;
  align-items: center;
  gap: 15px;
  height: 50px;
  padding: 6px 11px 0;
  background: #f1f1f1;
}
.thumb {
  width: 44px;
  height: 34px;
  border: 3px solid #0696d7;
  border-radius: 2px;
  background: #fff;
}
.thumb svg { width: 38px; height: 28px; }
.add-sheet svg { width: 22px; height: 22px; }
```
